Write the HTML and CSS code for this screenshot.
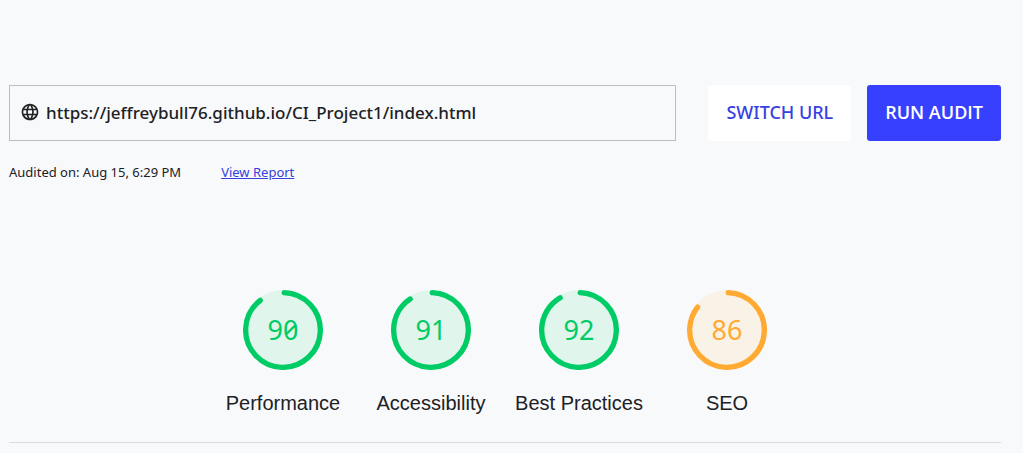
FILE: index.html
```
<!DOCTYPE html>
<html lang="en">
<head>
<meta charset="utf-8">
<meta name="viewport" content="width=device-width, initial-scale=1">
<title>Site audit</title>
<link rel="stylesheet" href="styles.css">
</head>
<body>
<main class="page">
  <form class="audit-form">
    <label class="url-field">
      <svg class="globe" viewBox="0 0 24 24" aria-hidden="true">
        <path d="M11.99 2C6.47 2 2 6.48 2 12s4.47 10 9.99 10C17.52 22 22 17.52 22 12S17.52 2 11.99 2zm6.93 6h-2.95a15.65 15.65 0 0 0-1.38-3.56A8.03 8.03 0 0 1 18.92 8zM12 4.04c.83 1.2 1.48 2.53 1.91 3.96h-3.82c.43-1.43 1.08-2.76 1.91-3.96zM4.26 14C4.1 13.36 4 12.69 4 12s.1-1.36.26-2h3.38c-.08.66-.14 1.32-.14 2s.06 1.34.14 2H4.26zm.82 2h2.95c.32 1.25.78 2.45 1.38 3.56A7.99 7.99 0 0 1 5.08 16zm2.95-8H5.08a7.99 7.99 0 0 1 4.33-3.56A15.65 15.65 0 0 0 8.03 8zM12 19.96c-.83-1.2-1.48-2.53-1.91-3.96h3.82c-.43 1.43-1.08 2.76-1.91 3.96zM14.34 14H9.66c-.09-.66-.16-1.32-.16-2s.07-1.35.16-2h4.68c.09.65.16 1.32.16 2s-.07 1.34-.16 2zm.25 5.56c.6-1.11 1.06-2.31 1.38-3.56h2.95a8.03 8.03 0 0 1-4.33 3.56zM16.36 14c.08-.66.14-1.32.14-2s-.06-1.34-.14-2h3.38c.16.64.26 1.31.26 2s-.1 1.36-.26 2h-3.38z"/>
      </svg>
      <input class="url-input" type="text" aria-label="Page URL" value="https://jeffreybull76.github.io/CI_Project1/index.html">
    </label>
    <div class="actions">
      <button class="button button-light" type="button">SWITCH URL</button>
      <button class="button button-primary" type="button">RUN AUDIT</button>
    </div>
  </form>
  <div class="meta">
    <span>Audited on: Aug 15, 6:29 PM</span>
    <a class="report-link" href="#report">View Report</a>
  </div>
  <section class="scores" id="report">
    <div class="score pass">
      <div class="gauge">
        <svg class="ring" viewBox="0 0 120 120" aria-hidden="true"><circle class="disc" cx="60" cy="60" r="60"/><circle class="arc" cx="60" cy="60" r="56" stroke-dasharray="312.7 352"/></svg>
        <span class="value">90</span>
      </div>
      <span class="name">Performance</span>
    </div>
    <div class="score pass">
      <div class="gauge">
        <svg class="ring" viewBox="0 0 120 120" aria-hidden="true"><circle class="disc" cx="60" cy="60" r="60"/><circle class="arc" cx="60" cy="60" r="56" stroke-dasharray="316.2 352"/></svg>
        <span class="value">91</span>
      </div>
      <span class="name">Accessibility</span>
    </div>
    <div class="score pass">
      <div class="gauge">
        <svg class="ring" viewBox="0 0 120 120" aria-hidden="true"><circle class="disc" cx="60" cy="60" r="60"/><circle class="arc" cx="60" cy="60" r="56" stroke-dasharray="319.7 352"/></svg>
        <span class="value">92</span>
      </div>
      <span class="name">Best Practices</span>
    </div>
    <div class="score average">
      <div class="gauge">
        <svg class="ring" viewBox="0 0 120 120" aria-hidden="true"><circle class="disc" cx="60" cy="60" r="60"/><circle class="arc" cx="60" cy="60" r="56" stroke-dasharray="298.6 352"/></svg>
        <span class="value">86</span>
      </div>
      <span class="name">SEO</span>
    </div>
  </section>
</main>
</body>
</html>
```
FILE: styles.css
```
* {
  box-sizing: border-box;
}

body {
  margin: 0;
  background: #f8f9fb;
  color: #202124;
  font-family: "Noto Sans", "Segoe UI", sans-serif;
}

.page {
  padding: 85px 22px 0 9px;
}

.audit-form {
  display: flex;
  gap: 32px;
}

.url-field {
  display: flex;
  flex: 1;
  align-items: center;
  gap: 6px;
  min-width: 0;
  height: 56px;
  padding: 0 12px 2px 10px;
  border: 1px solid #bcbdc1;
}

.globe {
  flex: none;
  width: 20px;
  height: 20px;
  fill: #202124;
}

.url-input {
  flex: 1;
  min-width: 0;
  padding: 2px 0 0;
  border: 0;
  outline: 0;
  background: transparent;
  color: #202124;
  font: 500 17px/24px "Noto Sans", "Segoe UI", sans-serif;
}

.actions {
  display: flex;
  gap: 16px;
}

.button {
  padding: 0 18px 2px;
  border: 0;
  border-radius: 3px;
  font: 500 18px/24px "Noto Sans", "Segoe UI", sans-serif;
  white-space: nowrap;
}

.button-light {
  background: #fff;
  color: #3740e0;
}

.button-primary {
  background: #3740ff;
  color: #fff;
  font-family: "Open Sans", "Segoe UI", sans-serif;
  font-weight: 600;
}

.meta {
  display: flex;
  gap: 40px;
  padding-top: 21px;
  font-size: 13px;
  line-height: 20px;
}

.report-link {
  color: #3740d8;
}

.scores {
  display: grid;
  grid-template-columns: repeat(4, 148px);
  justify-content: center;
  margin-top: 108px;
  padding-bottom: 26px;
  border-bottom: 1px solid #dadce0;
}

.score {
  display: flex;
  flex-direction: column;
  align-items: center;
  gap: 20px;
}

.pass {
  color: #0c6;
}

.average {
  color: #fa3;
}

.gauge {
  display: grid;
  width: 80px;
  height: 80px;
  place-items: center;
}

.ring,
.value {
  grid-area: 1 / 1;
}

.ring {
  width: 80px;
  height: 80px;
  fill: none;
}

.disc {
  fill: #e0f5ec;
}

.average .disc {
  fill: #f9f2e6;
}

.arc {
  stroke: currentColor;
  stroke-width: 8;
  stroke-linecap: round;
  transform: rotate(-88deg);
  transform-origin: 50% 50%;
}

.value {
  font: 400 27px/32px "Noto Sans", sans-serif;
  font-variant-numeric: slashed-zero;
}

.name {
  color: #202124;
  font: 400 20px/26px Arial, "Liberation Sans", sans-serif;
  white-space: nowrap;
}
```
